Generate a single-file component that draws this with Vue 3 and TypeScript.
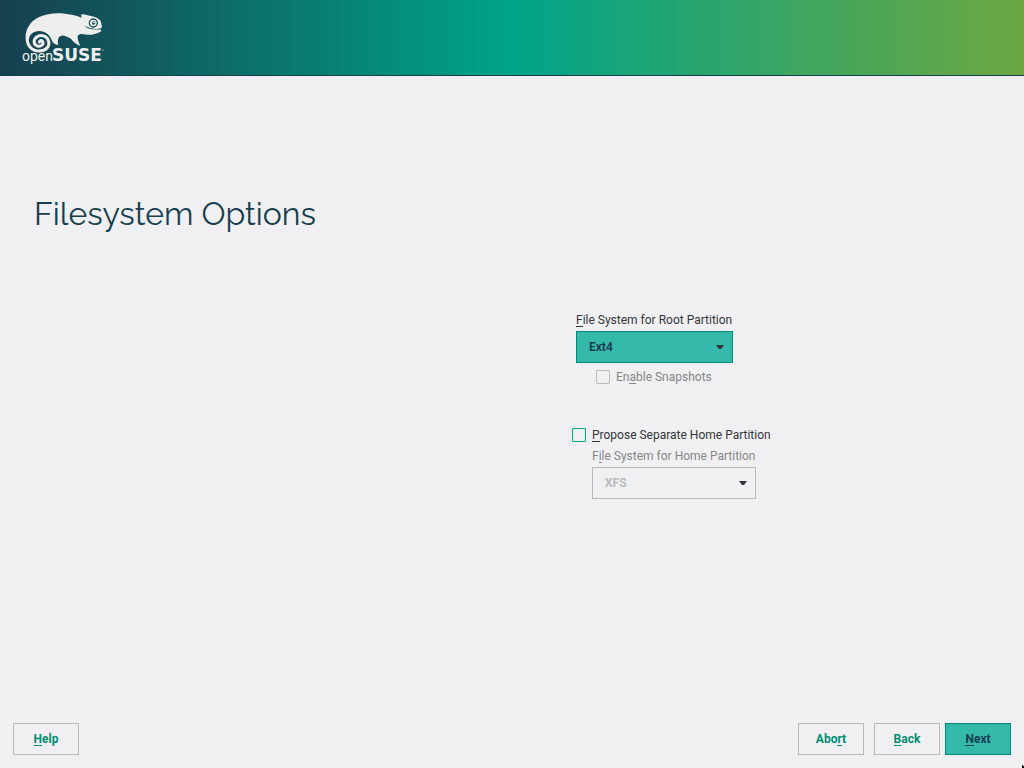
<script setup lang="ts">
import { ref } from 'vue'

const rootFs = ref('Ext4')
const homeFs = ref('XFS')
const snapshots = ref(false)
const separateHome = ref(false)
</script>

<template>
  <div class="installer">
    <header class="banner">
      <svg class="logo" viewBox="20 10 86 56" role="img" aria-label="openSUSE">
        <g transform="translate(10 0) scale(0.3333)">
          <path class="skin" d="M47 116C45 90 60 64 86 52C110 40 140 38 165 41C186 43 203 48 215 53L213 45Q215 42 220 43L243 48Q263 52 272 62L276 80L273 85Q250 91 223 77Q236 91 272 88L274 94Q264 101 246 104C234 106 223 101 212 102C200 104 200 114 211 138Q194 132 183 116C172 111 163 106 155 107C144 109 142 119 145 135Q130 133 125 120C119 104 105 93 88 93C70 93 57 105 57 119Z" />
          <path class="coil" d="M52 112C49 136 66 153 88 153C107 153 120 140 116 124C112 107 92 102 80 111C69 120 70 134 82 138C93 141 102 133 98 125C95 119 89 121 88 126" />
          <circle class="eye-ring" cx="250" cy="69" r="12" />
          <circle class="pupil" cx="251" cy="69" r="5" />
          <path class="skin" d="M249 66h5v3h-5z" />
        </g>
        <text class="word-open" x="22" y="61">open</text>
        <text class="word-suse" x="52" y="61">SUSE</text>
        <circle class="skin" cx="103" cy="50" r="0.600" />
      </svg>
    </header>

    <main class="content">
      <h1>Filesystem Options</h1>
      <form class="options" @submit.prevent>
        <section class="root-group">
          <label for="root-fs"><u>F</u>ile System for Root Partition</label>
          <div class="combo combo-root">
            <select id="root-fs" v-model="rootFs">
              <option>Ext4</option>
              <option>Btrfs</option>
              <option>XFS</option>
            </select>
            <svg class="arrow" viewBox="0 0 8 4" aria-hidden="true"><path d="M0 0h8L5 4H3z" /></svg>
          </div>
          <label class="check check-snapshots">
            <input v-model="snapshots" type="checkbox" disabled />
            <span>En<u>a</u>ble Snapshots</span>
          </label>
        </section>
        <section>
          <label class="check">
            <input v-model="separateHome" type="checkbox" />
            <span><u>P</u>ropose Separate Home Partition</span>
          </label>
          <div class="home-group">
            <label class="muted" for="home-fs">F<u>i</u>le System for Home Partition</label>
            <div class="combo combo-home">
              <select id="home-fs" v-model="homeFs" :disabled="!separateHome">
                <option>XFS</option>
                <option>Ext4</option>
              </select>
              <svg class="arrow" viewBox="0 0 8 4" aria-hidden="true"><path d="M0 0h8L5 4H3z" /></svg>
            </div>
          </div>
        </section>
      </form>
    </main>

    <footer class="actions">
      <button type="button" class="help"><span><u>H</u>elp</span></button>
      <button type="button"><span>Abo<u>r</u>t</span></button>
      <button type="button" class="back"><span><u>B</u>ack</span></button>
      <button type="button" class="primary"><span><u>N</u>ext</span></button>
    </footer>
    <svg class="pointer" viewBox="0 0 2 3" aria-hidden="true"><path d="M0 0h1v1h1v2H0z" /></svg>
  </div>
</template>

<style>
body {
  margin: 0;
  background: #f0f0f3;
}
</style>

<style scoped>
.installer {
  min-height: 100vh;
  box-sizing: border-box;
  display: flex;
  flex-direction: column;
  color: #333639;
  font: 12px/16px Roboto, "Liberation Sans", sans-serif;
}
.banner {
  box-sizing: border-box;
  height: 76px;
  padding: 10px 20px;
  border-bottom: 1px solid #173f4f;
  background: linear-gradient(to right, #173f4f, #00a489 50%, #6da741);
}
.logo {
  display: block;
  width: 86px;
  height: 56px;
}
.skin,
.word-open,
.word-suse {
  fill: #eeeeec;
}
.coil {
  fill: none;
  stroke: #eeeeec;
  stroke-width: 9;
  stroke-linecap: round;
}
.eye-ring {
  fill: #eeeeec;
  stroke: #14505a;
  stroke-width: 4;
}
.pupil {
  fill: #14505a;
}
.word-open {
  font: 14px Roboto, sans-serif;
}
.word-suse {
  font: bold 17px "DejaVu Sans", sans-serif;
}
.content {
  flex: 1;
  padding: 116px 0 0;
}
h1 {
  margin: 0 34px;
  color: #173f4f;
  font: 400 32px/44px Raleway, Lato, sans-serif;
}
.options {
  display: flex;
  flex-direction: column;
  gap: 42px;
  margin: 76px 0 0 calc(50% + 60px);
}
.root-group {
  padding-left: 4px;
}
label {
  display: block;
}
u {
  text-decoration: none;
  box-shadow: inset 0 -1px 0 currentColor;
}
.combo {
  position: relative;
  margin-top: 3px;
}
.combo-root {
  width: 157px;
}
.combo-home {
  width: 164px;
}
select {
  display: block;
  box-sizing: border-box;
  width: 100%;
  height: 32px;
  padding: 0 12px;
  border: 1px solid #008d75;
  border-radius: 0;
  appearance: none;
  background: #35b9ab;
  color: #173f4f;
  font: bold 12px/16px Roboto, "Liberation Sans", sans-serif;
}
select:disabled {
  border-color: #b8babc;
  background: transparent;
  color: #b8babc;
  opacity: 1;
}
.arrow {
  position: absolute;
  right: 9px;
  top: 14px;
  width: 8px;
  height: 4px;
  fill: #2e3436;
  pointer-events: none;
}
.check {
  display: flex;
  align-items: center;
  gap: 6px;
}
.check-snapshots {
  margin: 6px 0 0 20px;
  color: #868686;
}
.check input {
  box-sizing: border-box;
  width: 14px;
  height: 14px;
  margin: 0;
  appearance: none;
  border: 1px solid #00a97b;
  border-radius: 1px;
}
.check input:checked {
  background: #35b9ab;
}
.check input:disabled {
  border-color: #b8babc;
}
.home-group {
  padding: 5px 0 0 20px;
}
.muted {
  color: #868686;
}
.actions {
  display: flex;
  padding: 0 13px 13px;
}
button {
  box-sizing: border-box;
  width: 66px;
  height: 32px;
  padding: 0;
  border: 1px solid #b8babc;
  background: transparent;
  color: #008d75;
  font: bold 12px/16px Roboto, "Liberation Sans", sans-serif;
}
.help {
  margin-right: auto;
}
.back {
  margin: 0 5px 0 10px;
}
.primary {
  border-color: #008d75;
  background: #35b9ab;
  color: #173f4f;
}
.pointer {
  position: fixed;
  right: 0;
  bottom: 0;
  width: 2px;
  height: 3px;
  fill: #000;
}
</style>
